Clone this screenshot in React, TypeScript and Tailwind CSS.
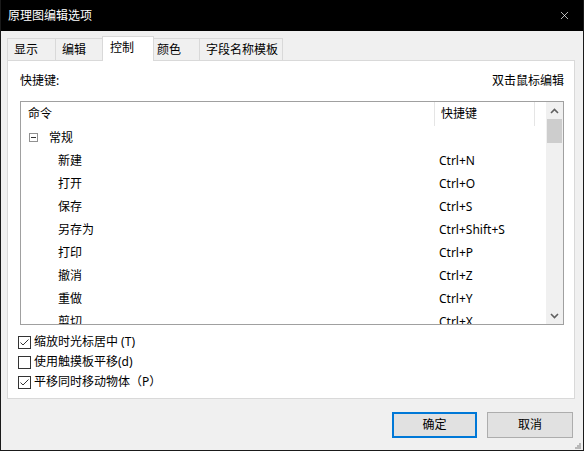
import { X } from 'lucide-react'

const items: [string, string][] = [
  ['新建', 'Ctrl+N'],
  ['打开', 'Ctrl+O'],
  ['保存', 'Ctrl+S'],
  ['另存为', 'Ctrl+Shift+S'],
  ['打印', 'Ctrl+P'],
  ['撤消', 'Ctrl+Z'],
  ['重做', 'Ctrl+Y'],
  ['剪切', 'Ctrl+X'],
]

const options: [string, boolean][] = [
  ['缩放时光标居中 (T)', true],
  ['使用触摸板平移(d)', false],
  ['平移同时移动物体（P）', true],
]

function Chevron({ up }: { up?: boolean }) {
  return (
    <svg width="9" height="6" viewBox="0 0 9 6">
      <path
        d={up ? 'M1 5 L4.5 1.5 L8 5' : 'M1 1 L4.5 4.5 L8 1'}
        fill="none"
        stroke="#606060"
        strokeWidth="1.6"
      />
    </svg>
  )
}

function CheckBox({ checked }: { checked: boolean }) {
  return (
    <div className="w-[13px] h-[13px] border border-[#333] bg-white flex items-center justify-center">
      {checked && (
        <svg width="11" height="11" viewBox="0 0 11 11">
          <path d="M1.5 5.5 L4 8 L9.5 2.5" fill="none" stroke="#333" strokeWidth="1" />
        </svg>
      )}
    </div>
  )
}

export default function App() {
  return (
    <div className="relative w-[584px] h-[451px] bg-[#f0f0f0] border-x border-b border-[#1a1a1a] flex flex-col text-[12px] text-black font-['Noto_Sans','Noto_Sans_CJK_SC',sans-serif] leading-none">
      {/* title bar */}
      <div className="h-[31px] bg-black flex items-center justify-between pl-[7px] pr-[12px] text-white">
        <span>原理图编辑选项</span>
        <X className="w-[13px] h-[13px]" strokeWidth={1.3} />
      </div>

      {/* tabs */}
      <div className="h-[29px] flex items-end pl-[6px]">
        <div className="w-[48px] h-[22px] border-l border-t border-[#d9d9d9] flex items-center pl-[6px]">显示</div>
        <div className="w-[47px] h-[22px] border-l border-t border-[#d9d9d9] flex items-center pl-[6px]">编辑</div>
        <div className="relative z-10 -mb-px w-[52px] h-[25px] border-x border-t border-[#d9d9d9] bg-white flex items-center pl-[7px] pb-[3px]">控制</div>
        <div className="w-[46px] h-[22px] border-r border-t border-[#d9d9d9] flex items-center pl-[3px]">颜色</div>
        <div className="w-[83px] h-[22px] border-r border-t border-[#d9d9d9] flex items-center pl-[6px]">字段名称模板</div>
      </div>

      {/* panel */}
      <div className="ml-[6px] w-[568px] h-[339px] bg-white border border-[#d9d9d9] flex flex-col">
        <div className="h-[40px] flex items-center justify-between pl-[12px] pr-[10px]">
          <span>快捷键:</span>
          <span>双击鼠标编辑</span>
        </div>

        <div className="ml-[12px] w-[544px] h-[224px] border border-[#a0a0a0] flex">
          <div className="flex-1 overflow-hidden">
            <div className="h-[24px] flex">
              <div className="w-[414px] border-r border-[#e5e5e5] flex items-center pl-[7px]">命令</div>
              <div className="w-[100px] border-r border-[#e5e5e5] flex items-center pl-[6px]">快捷键</div>
            </div>
            <div className="h-[23px] flex items-center pl-[8px]">
              <div className="w-[9px] h-[9px] border border-[#919191] flex items-center justify-center">
                <div className="w-[5px] h-px bg-[#333]" />
              </div>
              <span className="ml-[11px]">常规</span>
            </div>
            {items.map(([name, key]) => (
              <div key={name} className="h-[23px] flex items-center">
                <div className="w-[414px] pl-[37px]">{name}</div>
                <div className="pl-[4px]">{key}</div>
              </div>
            ))}
          </div>
          <div className="w-[17px] bg-[#f0f0f0] flex flex-col">
            <div className="h-[17px] flex items-center justify-center">
              <Chevron up />
            </div>
            <div className="mx-[1px] h-[24px] bg-[#cdcdcd]" />
            <div className="flex-1" />
            <div className="h-[17px] flex items-center justify-center">
              <Chevron />
            </div>
          </div>
        </div>

        <div className="mt-[7px] pl-[10px] flex flex-col">
          {options.map(([label, checked]) => (
            <div key={label} className="h-[20px] flex items-center gap-[3px]">
              <CheckBox checked={checked} />
              <span>{label}</span>
            </div>
          ))}
        </div>
      </div>

      {/* buttons */}
      <div className="mt-[13px] flex justify-end gap-[10px] pr-[10px]">
        <button className="w-[85px] h-[26px] border-2 border-[#0078d7] bg-[#e1e1e1] flex items-center justify-center">确定</button>
        <button className="w-[86px] h-[26px] border border-[#adadad] bg-[#e1e1e1] flex items-center justify-center">取消</button>
      </div>

      <svg className="absolute right-[2px] bottom-[1px]" width="7" height="7" viewBox="0 0 7 7">
        <rect x="5" y="1" width="2" height="2" fill="#b8b8b8" />
        <rect x="3" y="3" width="2" height="2" fill="#b8b8b8" />
        <rect x="5" y="3" width="2" height="2" fill="#b8b8b8" />
        <rect x="1" y="5" width="2" height="2" fill="#b8b8b8" />
        <rect x="3" y="5" width="2" height="2" fill="#b8b8b8" />
        <rect x="5" y="5" width="2" height="2" fill="#b8b8b8" />
      </svg>
    </div>
  )
}
